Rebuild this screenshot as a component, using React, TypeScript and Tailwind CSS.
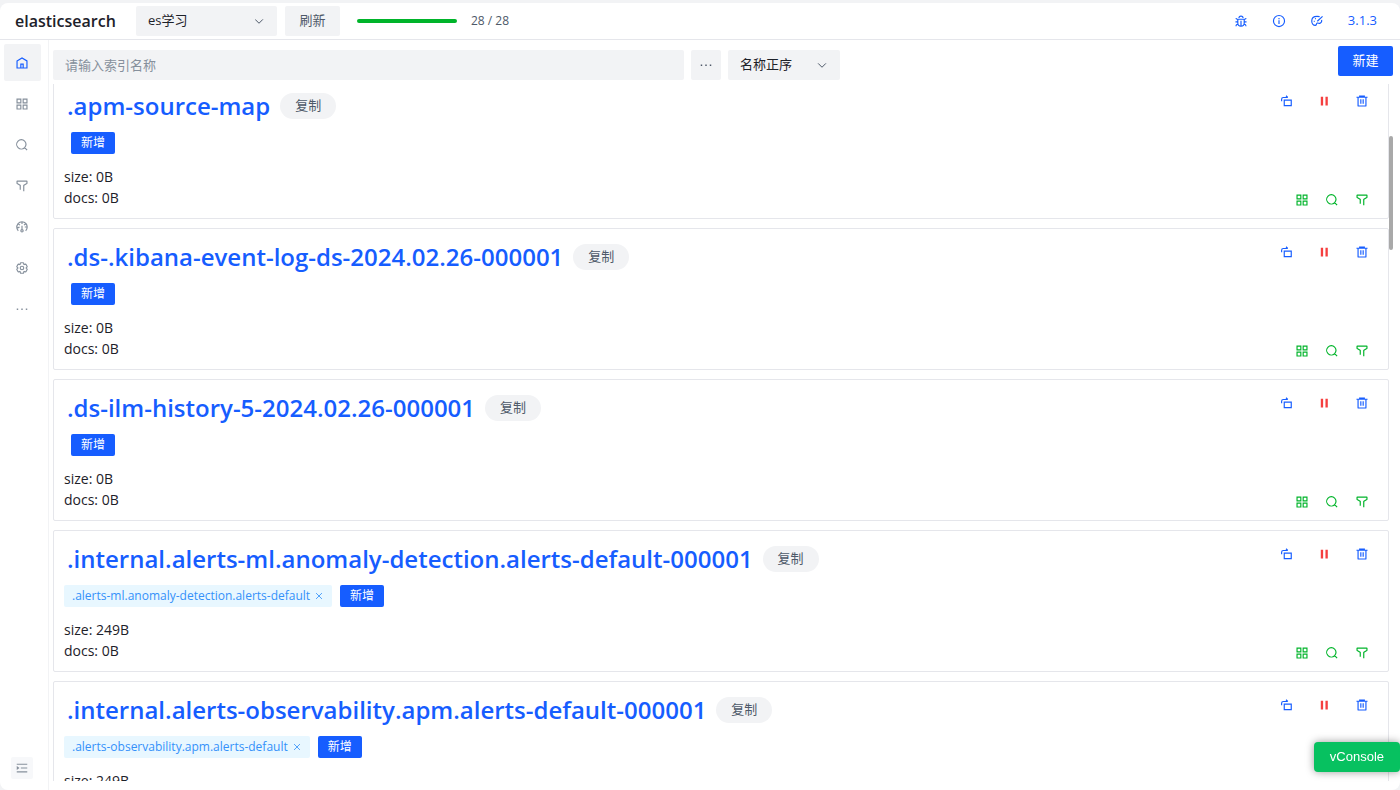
import { clsx } from "clsx";
import type { ReactNode } from "react";

const indices = [
  { name: ".apm-source-map", size: "0B", docs: "0B", aliases: [] },
  { name: ".ds-.kibana-event-log-ds-2024.02.26-000001", size: "0B", docs: "0B", aliases: [] },
  { name: ".ds-ilm-history-5-2024.02.26-000001", size: "0B", docs: "0B", aliases: [] },
  {
    name: ".internal.alerts-ml.anomaly-detection.alerts-default-000001",
    size: "249B",
    docs: "0B",
    aliases: [".alerts-ml.anomaly-detection.alerts-default"],
  },
  {
    name: ".internal.alerts-observability.apm.alerts-default-000001",
    size: "249B",
    docs: "0B",
    aliases: [".alerts-observability.apm.alerts-default"],
  },
];

const paths: Record<string, ReactNode> = {
  home: <path d="M7 17 24 7l17 10v24H7V17ZM20 28h8v13h-8V28Z" />,
  apps: <path d="M7 7h13v13H7V7ZM28 7h13v13H28V7ZM7 28h13v13H7V28ZM28 28h13v13H28V28Z" />,
  search: (
    <path d="M33.072 33.071c6.248-6.248 6.248-16.379 0-22.627-6.249-6.249-16.38-6.249-22.628 0-6.248 6.248-6.248 16.379 0 22.627 6.248 6.248 16.38 6.248 22.628 0Zm0 0 8.485 8.485" />
  ),
  filter: (
    <path d="M30 42V22.549a1 1 0 0 1 .463-.844l10.074-6.41A1 1 0 0 0 41 14.45V8a1 1 0 0 0-1-1H8a1 1 0 0 0-1 1v6.451a1 1 0 0 0 .463.844l10.074 6.41a1 1 0 0 1 .463.844V37" />
  ),
  dashboard: (
    <path d="M41.8 24c.1 4.6-1.5 9.3-5.2 13m5.2-13h-8.3m8.3 0c-.1-4.4-1.8-8.7-4.6-12M24 6c5.5 0 10 2.4 13.2 6M24 6c-5.7 0-10.4 2.6-13.5 6.4M24 6v7.5M37.2 12 31 17.5m-20.5-5.1L17 17.5m-6.5-5.1C7 16.7 5.4 22.5 6.5 28m4.9 9c-2.7-2.6-4.2-5.7-4.9-9m0 0 9-3.5M28 37a4 4 0 1 1-8 0 4 4 0 0 1 8 0Zm-4-4V19.5" />
  ),
  settings: (
    <>
      <path d="M18.797 6.732A1 1 0 0 1 19.76 6h8.48a1 1 0 0 1 .964.732l1.285 4.628a1 1 0 0 0 1.213.7l4.651-1.2a1 1 0 0 1 1.116.468l4.24 7.344a1 1 0 0 1-.153 1.2L38.193 23.3a1 1 0 0 0 0 1.402l3.364 3.427a1 1 0 0 1 .153 1.2l-4.24 7.344a1 1 0 0 1-1.116.468l-4.65-1.2a1 1 0 0 0-1.214.7l-1.285 4.628a1 1 0 0 1-.964.732h-8.48a1 1 0 0 1-.963-.732L17.51 36.64a1 1 0 0 0-1.213-.7l-4.65 1.2a1 1 0 0 1-1.116-.468l-4.24-7.344a1 1 0 0 1 .153-1.2L9.809 24.7a1 1 0 0 0 0-1.402l-3.364-3.427a1 1 0 0 1-.153-1.2l4.24-7.344a1 1 0 0 1 1.116-.468l4.65 1.2a1 1 0 0 0 1.213-.7l1.286-4.628Z" />
      <circle cx="24" cy="24" r="6" />
    </>
  ),
  more: (
    <path
      fill="currentColor"
      stroke="none"
      d="M6 22h5v5H6zM21.500 22h5v5h-5zM37 22h5v5h-5z"
    />
  ),
  bug: (
    <path d="M24 42c-6.075 0-11-4.925-11-11V18h22v13c0 6.075-4.925 11-11 11Zm0 0V23m11 4h8M5 27h8M7 14a4 4 0 0 0 4 4h26a4 4 0 0 0 4-4m0 28v-.5a6.500 6.500 0 0 0-6.500-6.500M7 42v-.5a6.500 6.500 0 0 1 6.500-6.500M17 14a7 7 0 1 1 14 0" />
  ),
  info: (
    <>
      <circle cx="24" cy="24" r="19" />
      <path d="M24 21v13m0-20v4" />
    </>
  ),
  skin: (
    <>
      <path d="M33 9C30 8 27 8 24 8 13 8 6 15 6 24c0 8 5 15 12 15 5 0 3-6 7-8 4-1 7 3 11 0 3-2 5-6 4-11" />
      <path d="M43 8 25 25" />
      <path d="M13 25h3M17 16h3" />
    </>
  ),
  rotate: (
    <>
      <path d="M18 21h24v19H18z" />
      <path d="M9 25v-7c0-4 2-6 6-6h15M24 6l6 6" />
    </>
  ),
  pause: <path fill="currentColor" stroke="none" d="M13 9h8v30h-8zM29 9h8v30h-8z" />,
  trash: (
    <path d="M5 11h5.500m0 0v29a1 1 0 0 0 1 1h25a1 1 0 0 0 1-1V11m-27 0H16m21.500 0H43m-5.500 0H32m-16 0V7h16v4m-16 0h16M20 18v15m8-15v15" />
  ),
  unfold: (
    <>
      <path d="M42 11H6M42 24H20M42 37H6" />
      <path fill="currentColor" d="m12 24-4-3v6l4-3Z" />
    </>
  ),
  down: <path d="M39.600 17.443 24.043 33 8.487 17.443" />,
  close: <path d="M9.857 9.858 24 24m0 0 14.142 14.142M24 24 38.142 9.858M24 24 9.857 38.142" />,
};

const Icon = ({ name, className = "size-[14px]" }: { name: string; className?: string }) => (
  <svg
    viewBox="0 0 48 48"
    fill="none"
    stroke="currentColor"
    strokeWidth="4"
    className={clsx("shrink-0", className)}
    aria-hidden="true"
  >
    {paths[name]}
  </svg>
);

const IconButton = ({ name, label, className }: { name: string; label: string; className?: string }) => (
  <button type="button" aria-label={label} className={clsx("flex items-center justify-center", className)}>
    <Icon name={name} />
  </button>
);

const Select = ({ label, value, className }: { label: string; value: string; className: string }) => (
  <div className={clsx("relative h-[30px]", className)}>
    <select aria-label={label} className="size-full appearance-none rounded-xs bg-[#f2f3f5] px-3 text-[13px]">
      <option>{value}</option>
    </select>
    <Icon name="down" className="pointer-events-none absolute top-[9px] right-3 size-3 text-[#4e5969]" />
  </div>
);

const menu = [
  { icon: "home", label: "首页" },
  { icon: "apps", label: "数据浏览" },
  { icon: "search", label: "基础搜索" },
  { icon: "filter", label: "高级搜索" },
  { icon: "dashboard", label: "仪表盘" },
  { icon: "settings", label: "设置" },
  { icon: "more", label: "更多" },
];

const Header = () => (
  <header className="flex h-[37px] shrink-0 items-center border-b border-[#e5e6eb] pr-[23px] pl-[15px]">
    <h1 className="w-[121px] text-base font-semibold">elasticsearch</h1>
    <Select label="连接" value="es学习" className="w-[141px]" />
    <button type="button" className="ml-2 h-[30px] w-[55px] rounded-xs bg-[#f2f3f5] text-[13px] text-[#4e5969]">
      刷新
    </button>
    <div className="ml-[17px] h-1 w-[100px] rounded-full bg-[#00b42a]" />
    <span className="ml-[14px] text-xs text-[#4e5969]">28 / 28</span>
    <div className="ml-auto flex items-center gap-6 text-[#165dff]">
      <IconButton name="bug" label="反馈" />
      <IconButton name="info" label="关于" />
      <IconButton name="skin" label="主题" />
      <a href="#version" className="text-[13px]">
        3.1.3
      </a>
    </div>
  </header>
);

const Sidebar = () => (
  <aside className="flex w-[49px] shrink-0 flex-col justify-between border-r border-[#f2f3f5] px-1 pt-1 pb-[11px]">
    <nav className="flex flex-col gap-1">
      {menu.map((item, i) => (
        <IconButton
          key={item.icon}
          name={item.icon}
          label={item.label}
          className={clsx("h-[37px] w-[37px] rounded-xs pr-[2px]", i === 0 ? "bg-[#f2f3f5] text-[#165dff]" : "text-[#86909c]")}
        />
      ))}
    </nav>
    <IconButton name="unfold" label="展开菜单" className="ml-[7px] size-[22px] rounded-xs bg-[#f7f8fa] text-[#86909c]" />
  </aside>
);

const IndexCard = ({ name, size, docs, aliases }: (typeof indices)[number]) => (
  <article className="flex h-[142px] shrink-0 justify-between rounded-xs border border-[#e5e6eb] pr-[19px] pl-[10px]">
    <div>
      <div className="mt-[14px] flex h-[28px] items-center gap-[10px] pl-[3px]">
        <h2 className="text-2xl font-semibold whitespace-nowrap text-[#165dff]">{name}</h2>
        <button type="button" className="h-[26px] w-[56px] rounded-full bg-[#f2f3f5] text-[13px] text-[#4e5969]">
          复制
        </button>
      </div>
      <div className="mt-3 flex h-[22px] items-center gap-2">
        {aliases.map((alias) => (
          <span key={alias} className="flex h-[22px] items-center gap-1 rounded-xs bg-[#e8f7ff] px-2 text-xs text-[#3491fa]">
            {alias}
            <button type="button" aria-label={`删除 ${alias}`}>
              <Icon name="close" className="size-[10px]" />
            </button>
          </span>
        ))}
        <button
          type="button"
          className={clsx("h-[22px] w-[44px] rounded-xs bg-[#165dff] text-xs text-white", !aliases.length && "ml-[7px]")}
        >
          新增
        </button>
      </div>
      <div className="mt-3 text-sm leading-[21px]">
        <div>size: {size}</div>
        <div>docs: {docs}</div>
      </div>
    </div>
    <div className="flex flex-col items-end justify-between pt-4 pb-[11px]">
      <div className="flex gap-6 text-[#165dff]">
        <IconButton name="rotate" label="索引操作" />
        <IconButton name="pause" label="关闭" className="text-[#f53f3f]" />
        <IconButton name="trash" label="删除" />
      </div>
      <div className="flex gap-4 text-[#00b42a]">
        <IconButton name="apps" label="数据浏览" />
        <IconButton name="search" label="基础搜索" />
        <IconButton name="filter" label="高级搜索" />
      </div>
    </div>
  </article>
);

export default function App() {
  return (
    <div className="h-screen bg-[#f2f3f5] pt-[3px] font-['Open_Sans','Noto_Sans_CJK_SC',sans-serif] text-[#1d2129]">
      <div className="flex h-full flex-col overflow-hidden rounded-lg bg-white">
        <Header />
        <div className="flex min-h-0 flex-1">
          <Sidebar />
          <main className="relative flex min-w-0 flex-1 flex-col pb-[9px]">
            <div className="flex h-[44px] shrink-0 items-end pr-[7px] pb-1 pl-1">
              <input
                type="text"
                aria-label="索引名称"
                placeholder="请输入索引名称"
                className="h-[30px] w-[631px] rounded-xs bg-[#f2f3f5] px-3 text-[13px] placeholder:text-[#86909c]"
              />
              <IconButton name="more" label="更多条件" className="ml-[7px] h-[30px] w-[30px] rounded-xs bg-[#f2f3f5] text-[#4e5969]" />
              <Select label="排序" value="名称正序" className="ml-[7px] w-[112px]" />
              <button
                type="button"
                className="mb-1 ml-auto h-[30px] w-[55px] rounded-xs bg-[#165dff] text-[13px] text-white"
              >
                新建
              </button>
            </div>
            <div className="min-h-0 flex-1 overflow-hidden pr-[11px] pl-1">
              <div className="-mt-[7px] flex flex-col gap-[9px]">
                {indices.map((item) => (
                  <IndexCard key={item.name} {...item} />
                ))}
              </div>
            </div>
            <div className="absolute top-24 right-[7px] h-[114px] w-1 rounded-full bg-[#a9a9a9]" />
          </main>
        </div>
      </div>
      <button
        type="button"
        className="fixed right-0 bottom-[18px] h-[30px] rounded-sm bg-[#07c160] px-4 font-['Liberation_Sans',sans-serif] text-[13px] text-white shadow-[0_0_8px_rgba(0,0,0,0.4)]"
      >
        vConsole
      </button>
    </div>
  );
}
